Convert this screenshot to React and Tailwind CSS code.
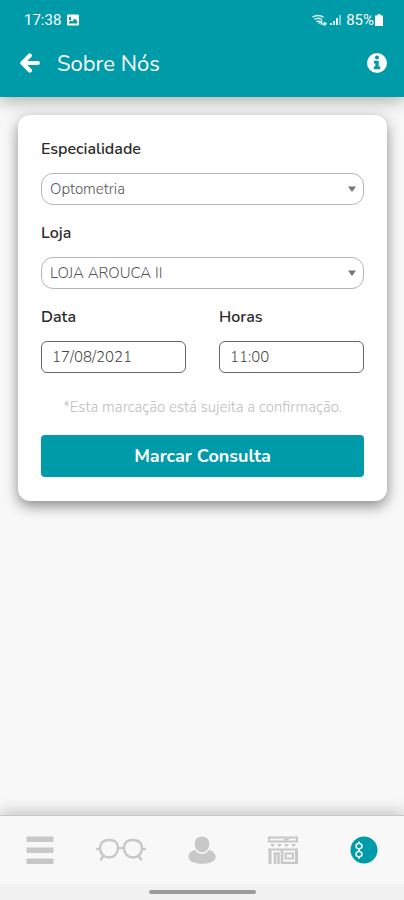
// src/pages/BookingPage.jsx
import React, { useState } from 'react'

const specialities = ['Optometria', 'Contactologia', 'Audiologia']
const stores = ['LOJA AROUCA II', 'LOJA AROUCA I']

function StatusBar() {
  return (
    <div className="flex items-center justify-between h-9 pl-6 pr-5 pt-1 font-[Roboto,sans-serif] text-[15px]">
      <div className="flex items-center gap-1.5">
        <span>17:38</span>
        <svg className="w-3 h-3" viewBox="0 0 12 12">
          <rect y=".5" width="12" height="11" rx="1" fill="currentColor" />
          <path d="M2 3h2v3H2zM1.800 9.500V8l2-1.500 1.500 1L8 4.500l2.300 3v2z" fill="#009ba8" />
        </svg>
      </div>
      <div className="flex items-center">
        <svg className="w-4 h-3 mr-0.5" viewBox="0 0 16 12" fill="none" stroke="currentColor" strokeWidth="1.5" opacity="0.85">
          <path d="M.5 3.200C3.500.8 8.500.8 11.500 3.200M2.500 5.500C4.500 3.700 8 3.700 10 5.500M4.500 7.800c1.200-1 2.500-1 3.700 0" />
          <path d="M6.500 9.500L9.500 7v3h4M12 8l2 1.800-2 1.700" />
        </svg>
        <svg className="w-3 h-3 mr-1" viewBox="0 0 12 12" fill="currentColor">
          <path d="M0 9h2v2H0zM3 7h2v4H3zM6 4h2v7H6z" opacity="0.9" />
          <path d="M9 1h2v10H9z" opacity="0.5" />
        </svg>
        <span>85%</span>
        <svg className="w-2.5 h-3" viewBox="0 0 10 12" fill="currentColor">
          <path d="M3.500 0h3v1.500H9V12H1V1.500h2.500z" />
        </svg>
      </div>
    </div>
  )
}

function BackIcon() {
  return (
    <svg className="w-5 h-5" viewBox="0 0 20 20" fill="none" stroke="currentColor" strokeWidth="4.2" strokeLinejoin="round" strokeLinecap="round">
      <path d="M9.800 2.600L2.400 10l7.400 7.400" />
      <path d="M4 10h13.800" />
    </svg>
  )
}

function InfoIcon() {
  return (
    <svg className="w-5 h-5" viewBox="0 0 20 20">
      <circle cx="10" cy="10" r="10" fill="currentColor" />
      <circle cx="10" cy="4.600" r="2" fill="#009ba8" />
      <path d="M7 7.800h4.700v5.700h1.500v2.700H6.800v-2.700h1.500v-3H7z" fill="#009ba8" />
    </svg>
  )
}

function SelectField({ id, label, options }) {
  const [value, setValue] = useState(options[0])

  return (
    <div className="mb-4">
      <label htmlFor={id} className="block text-base leading-6 font-semibold text-[#2b2b2b] mb-3">{label}</label>
      <div className="relative">
        <select
          id={id}
          value={value}
          onChange={(e) => setValue(e.target.value)}
          className="block w-full h-8 appearance-none rounded-xl border border-[#b5b5b5] bg-white px-2 text-[15px] font-light text-[#555555]"
        >
          {options.map((o) => (
            <option key={o} value={o}>{o}</option>
          ))}
        </select>
        <svg className="absolute right-2 top-3 w-2 h-2 pointer-events-none text-[#777777]" viewBox="0 0 8 8" fill="currentColor">
          <path d="M0 1.500h8L4 7z" />
        </svg>
      </div>
    </div>
  )
}

function TextField({ id, label, initial }) {
  const [value, setValue] = useState(initial)

  return (
    <div className="flex-1 min-w-0">
      <label htmlFor={id} className="block text-base leading-6 font-semibold text-[#2b2b2b] mb-3">{label}</label>
      <input
        id={id}
        type="text"
        value={value}
        onChange={(e) => setValue(e.target.value)}
        className="block w-full h-8 rounded-md border border-[#666666] bg-white px-2.5 text-[15px] font-light text-[#444444]"
      />
    </div>
  )
}

function MenuIcon() {
  return (
    <svg className="w-7 h-7" viewBox="0 0 28 28" fill="currentColor">
      <path d="M.5 .5h27v5.500H.5zM.5 11.500h27V17H.5zM.5 22.500h27V28H.5z" />
    </svg>
  )
}

function GlassesIcon() {
  return (
    <svg className="w-[50px] h-6" viewBox="0 0 50 24" fill="none" stroke="currentColor" strokeWidth="2.400" strokeLinecap="round">
      <path d="M12.500 2C19 1.500 22 5 22 10c0 5.500-4 9.500-9 9.500S4 16 4 10c0-5 3-7.600 8.500-8z" />
      <path d="M37.500 2C31 1.500 28 5 28 10c0 5.500 4 9.500 9 9.500s9-3.500 9-9.500c0-5-3-7.600-8.500-8z" />
      <path d="M22 10.500c2-.8 4-.8 6 0M1.200 11H4M46 11h2.800M7.500 17.500L5 21.500M42.500 17.500l2.500 4" />
    </svg>
  )
}

function UserIcon() {
  return (
    <svg className="w-7 h-7" viewBox="0 0 28 28" fill="currentColor">
      <path d="M14 .5c4.500 0 7.300 3 7.300 7.500S18 16.500 14 16.500 6.700 12.500 6.700 8 9.500.5 14 .5z" />
      <path d="M7.300 14C9 17 11.500 18 14 18s5-1 6.700-4c4 .5 7 3.500 7 7 0 4-6 6.800-13.700 6.800S.5 25 .5 21c0-3.500 3-6.500 6.800-7z" />
    </svg>
  )
}

function StoreIcon() {
  return (
    <svg className="w-8 h-7" viewBox="0 0 32 28" fill="none" stroke="currentColor" strokeWidth="2">
      <path d="M2 1.500h28v4H2z" />
      <path d="M17 3.500h5" />
      <path d="M3 8l2.500 3.200L8 8zM10 8l2.500 3.200L15 8zM17 8l2.500 3.200L22 8zM24 8l2.500 3.200L29 8z" fill="currentColor" stroke="none" />
      <path d="M1 13.500h30" />
      <path d="M3 13v15M29.500 13v15" strokeWidth="3" />
      <path d="M8 28V17.500h3.500V28M15 13v14h14" strokeWidth="2.500" />
      <path d="M18.500 17.500h7.500v5h-7.500z" />
    </svg>
  )
}

function BookingIcon() {
  return (
    <svg className="w-7 h-7" viewBox="0 0 28 28">
      <circle cx="14" cy="14" r="13.500" fill="#009ba8" />
      <g fill="none" stroke="#ffffff" strokeWidth="1.500" strokeLinejoin="round">
        <path d="M9 7.200l2.800 1.500v3L9 13.200l-2.800-1.500v-3z" />
        <path d="M9 15.200l2.800 1.500v3L9 21.200l-2.800-1.500v-3z" />
        <path d="M9 5.500v1.700M9 13.200v2M9 21.200v1.500" />
      </g>
    </svg>
  )
}

const navItems = [
  { label: 'Menu', Icon: MenuIcon },
  { label: 'Óculos', Icon: GlassesIcon },
  { label: 'Perfil', Icon: UserIcon },
  { label: 'Lojas', Icon: StoreIcon },
  { label: 'Marcações', Icon: BookingIcon },
]

export default function App() {
  return (
    <div className="min-h-screen flex flex-col bg-[#f8f8f8] font-[Nunito,Lato,sans-serif]">
      {/* Header */}
      <header className="bg-[#009ba8] text-white shadow-[0_4px_16px_rgba(0,0,0,0.3)]">
        <StatusBar />
        <div className="flex items-center h-[61px] pl-5 pr-[17px] pb-2">
          <button type="button" aria-label="Voltar">
            <BackIcon />
          </button>
          <h1 className="flex-1 ml-[17px] pt-0.5 text-[22px] leading-8">Sobre Nós</h1>
          <button type="button" aria-label="Informações">
            <InfoIcon />
          </button>
        </div>
      </header>

      {/* Booking form */}
      <main className="flex-1 pl-[18px] pr-[17px] pt-[18px]">
        <form
          onSubmit={(e) => e.preventDefault()}
          className="rounded-xl bg-white px-[23px] pt-[22px] pb-6 shadow-[0_5px_14px_rgba(0,0,0,0.45)]"
        >
          <SelectField id="speciality" label="Especialidade" options={specialities} />
          <SelectField id="store" label="Loja" options={stores} />
          <div className="flex gap-[33px]">
            <TextField id="date" label="Data" initial="17/08/2021" />
            <TextField id="time" label="Horas" initial="11:00" />
          </div>
          <p className="mt-6 mb-[18px] text-center text-[15px] leading-5 font-light text-[#bdbdbd]">
            *Esta marcação está sujeita a confirmação.
          </p>
          <button type="submit" className="w-full h-[42px] rounded bg-[#009ba8] text-lg font-bold text-white">
            Marcar Consulta
          </button>
        </form>
      </main>

      {/* Bottom navigation */}
      <nav className="flex items-center h-[69px] border-t border-[#c8c8c8] bg-[#f8f8f8] text-[#c8c8c8] shadow-[0_-4px_14px_rgba(0,0,0,0.2)]">
        {navItems.map(({ label, Icon }) => (
          <button key={label} type="button" aria-label={label} className="flex-1 flex items-center justify-center">
            <Icon />
          </button>
        ))}
      </nav>
      <div className="flex justify-center h-4 pt-1.5 bg-[#f1f1f1]">
        <div className="w-[107px] h-1 rounded-full bg-[#9b9b9b]" />
      </div>
    </div>
  )
}
